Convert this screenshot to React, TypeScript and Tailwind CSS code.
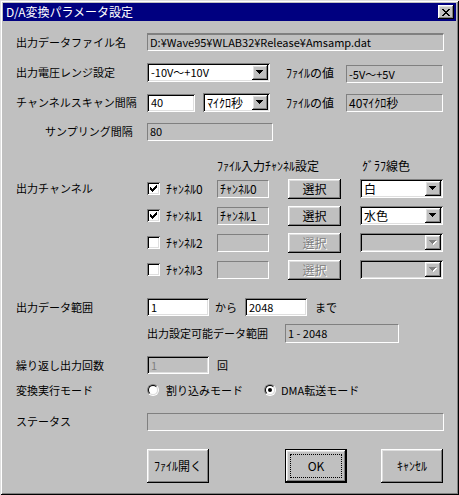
import React from "react";

const raised =
  "shadow-[inset_-1px_-1px_#000,inset_1px_1px_#fff,inset_-2px_-2px_#808080,inset_2px_2px_#dfdfdf]";
const sunken =
  "shadow-[inset_1px_1px_#808080,inset_-1px_-1px_#fff,inset_2px_2px_#000,inset_-2px_-2px_#dfdfdf]";

function Field({ className = "", children }: { className?: string; children?: React.ReactNode }) {
  return (
    <div
      className={`h-[18px] border border-t-[#808080] border-l-[#808080] border-b-white border-r-white pl-[2px] flex items-center whitespace-nowrap overflow-hidden ${className}`}
    >
      {children}
    </div>
  );
}

function Edit({
  className = "",
  disabled,
  children,
}: {
  className?: string;
  disabled?: boolean;
  children?: React.ReactNode;
}) {
  return (
    <div
      className={`h-[18px] ${sunken} pl-[4px] flex items-center ${
        disabled ? "bg-[#c0c0c0] text-[#808080]" : "bg-white"
      } ${className}`}
    >
      {children}
    </div>
  );
}

function Arrow({ disabled }: { disabled?: boolean }) {
  return (
    <svg width="8" height="5" viewBox="0 0 8 5" shapeRendering="crispEdges">
      {disabled && (
        <path d="M1 1h7v1h-1v1h-1v1h-1v1h-1v-1h-1v-1h-1v-1h-1z" fill="#fff" />
      )}
      <path
        d="M0 0h7v1h-1v1h-1v1h-1v1h-1v-1h-1v-1h-1v-1h-1z"
        fill={disabled ? "#808080" : "#000"}
      />
    </svg>
  );
}

function Combo({
  className = "",
  disabled,
  children,
}: {
  className?: string;
  disabled?: boolean;
  children?: React.ReactNode;
}) {
  return (
    <div
      className={`h-[19px] ${sunken} p-[2px] flex ${disabled ? "bg-[#c0c0c0]" : "bg-white"} ${className}`}
    >
      <div className="flex-1 pl-[2px] flex items-center whitespace-nowrap overflow-hidden">
        {children}
      </div>
      <div className={`w-[16px] h-full bg-[#c0c0c0] ${raised} flex items-center justify-center`}>
        <Arrow disabled={disabled} />
      </div>
    </div>
  );
}

function Button({
  className = "",
  disabled,
  isDefault,
  children,
}: {
  className?: string;
  disabled?: boolean;
  isDefault?: boolean;
  children?: React.ReactNode;
}) {
  if (isDefault) {
    return (
      <div className={`border border-black bg-[#c0c0c0] ${className}`}>
        <div className={`w-full h-full ${raised} p-[4px]`}>
          <div className="w-full h-full border border-dotted border-black flex items-center justify-center">
            {children}
          </div>
        </div>
      </div>
    );
  }
  return (
    <div
      className={`bg-[#c0c0c0] ${raised} flex items-center justify-center ${
        disabled ? "text-[#808080] [text-shadow:1px_1px_#fff]" : ""
      } ${className}`}
    >
      {children}
    </div>
  );
}

function Check({ checked }: { checked?: boolean }) {
  return (
    <div className={`w-[13px] h-[13px] bg-white ${sunken} flex items-center justify-center`}>
      {checked && (
        <svg width="7" height="7" viewBox="0 0 7 7" shapeRendering="crispEdges">
          <path d="M6 0h1v3h-1v1h-1v1h-1v1h-1v1h-1v-1h-1v-1h-1v-3h1v1h1v1h1v-1h1v-1h1z" fill="#000" />
        </svg>
      )}
    </div>
  );
}

function Radio({ checked }: { checked?: boolean }) {
  return (
    <div className="w-[12px] h-[12px] rounded-full border border-t-[#808080] border-l-[#808080] border-b-white border-r-white">
      <div className="w-full h-full rounded-full border border-t-black border-l-black border-b-[#dfdfdf] border-r-[#dfdfdf] bg-white flex items-center justify-center">
        {checked && <div className="w-[4px] h-[4px] rounded-full bg-black" />}
      </div>
    </div>
  );
}

const channels = [
  { name: "ﾁｬﾝﾈﾙ0", on: true, file: "ﾁｬﾝﾈﾙ0", color: "白" },
  { name: "ﾁｬﾝﾈﾙ1", on: true, file: "ﾁｬﾝﾈﾙ1", color: "水色" },
  { name: "ﾁｬﾝﾈﾙ2", on: false, file: "", color: "" },
  { name: "ﾁｬﾝﾈﾙ3", on: false, file: "", color: "" },
];

export default function App() {
  return (
    <div className="w-[459px] h-[495px] bg-[#c0c0c0] shadow-[inset_1px_1px_#dfdfdf,inset_-1px_-1px_#000,inset_2px_2px_#fff,inset_-2px_-2px_#808080] flex flex-col text-black text-[11px] leading-none font-['Noto_Sans_CJK_JP',sans-serif]">
      {/* title bar */}
      <div className="mx-[3px] mt-[3px] h-[18px] bg-[#000080] flex items-center justify-between pl-[3px] pr-[2px]">
        <span className="text-white text-[12px]">D/A変換パラメータ設定</span>
        <div className={`w-[16px] h-[14px] bg-[#c0c0c0] ${raised} flex items-center justify-center`}>
          <svg width="8" height="7" viewBox="0 0 8 7" shapeRendering="crispEdges">
            <path
              d="M0 0h2v1h1v1h2v-1h1v-1h2v1h-1v1h-1v1h-1v1h1v1h1v1h1v1h-2v-1h-1v-1h-2v1h-1v1h-2v-1h1v-1h1v-1h1v-1h-1v-1h-1v-1h-1z"
              fill="#000"
            />
          </svg>
        </div>
      </div>

      <div className="flex flex-col pl-[16px] pr-[15px]">
        <div className="mt-[12px] h-[18px] flex items-center">
          <span className="w-[131px]">出力データファイル名</span>
          <Field className="w-[297px] border-t-2 border-t-[#404040]">D:¥Wave95¥WLAB32¥Release¥Amsamp.dat</Field>
        </div>

        <div className="mt-[12px] h-[19px] flex items-center">
          <span className="w-[131px]">出力電圧レンジ設定</span>
          <Combo className="w-[123px]">-10V～+10V</Combo>
          <span className="ml-[16px] w-[60px] text-[12px]">ﾌｧｲﾙの値</span>
          <Field className="w-[97px] mt-[3px] h-[17px]">-5V～+5V</Field>
        </div>

        <div className="mt-[11px] h-[19px] flex items-center">
          <span className="w-[131px]">チャンネルスキャン間隔</span>
          <Edit className="w-[48px]">40</Edit>
          <Combo className="ml-[8px] w-[67px] text-[12px]">ﾏｲｸﾛ秒</Combo>
          <span className="ml-[16px] w-[60px] text-[12px]">ﾌｧｲﾙの値</span>
          <Field className="w-[97px] text-[12px]">40ﾏｲｸﾛ秒</Field>
        </div>

        <div className="mt-[11px] h-[17px] flex items-center">
          <span className="w-[131px] pl-[29px]">サンプリング間隔</span>
          <Field className="w-[126px] h-[17px]">80</Field>
        </div>

        <div className="mt-[19px] h-[14px] flex items-center text-[12px]">
          <span className="w-[201px]" />
          <span className="w-[145px]">ﾌｧｲﾙ入力ﾁｬﾝﾈﾙ設定</span>
          <span>ｸﾞﾗﾌ線色</span>
        </div>

        {channels.map((c, i) => (
          <div
            key={c.name}
            className={`${i === 0 ? "mt-[6px]" : "mt-[8px]"} h-[19px] flex items-center`}
          >
            <span className="w-[131px]">{i === 0 ? "出力チャンネル" : ""}</span>
            <Check checked={c.on} />
            <span className="ml-[6px] w-[51px] text-[12px]">{c.name}</span>
            <Field className="w-[52px] text-[12px]">{c.file}</Field>
            <Button className="ml-[19px] w-[53px] h-[20px] text-[12px]" disabled={!c.on}>
              選択
            </Button>
            <Combo className="ml-[19px] w-[83px] text-[12px]" disabled={!c.on}>
              {c.color}
            </Combo>
          </div>
        ))}

        <div className="mt-[19px] h-[18px] flex items-center">
          <span className="w-[131px]">出力データ範囲</span>
          <Edit className="w-[62px]">1</Edit>
          <span className="ml-[6px] w-[30px]">から</span>
          <Edit className="w-[62px]">2048</Edit>
          <span className="ml-[8px]">まで</span>
        </div>

        <div className="mt-[8px] h-[19px] flex items-center">
          <span className="w-[131px]" />
          <span className="w-[138px]">出力設定可能データ範囲</span>
          <Field className="w-[114px] h-[19px]">1 - 2048</Field>
        </div>

        <div className="mt-[13px] h-[18px] flex items-center">
          <span className="w-[131px]">繰り返し出力回数</span>
          <Edit className="w-[62px]" disabled>
            1
          </Edit>
          <span className="ml-[8px]">回</span>
        </div>

        <div className="mt-[8px] h-[16px] flex items-center">
          <span className="w-[131px]">変換実行モード</span>
          <Radio />
          <span className="ml-[7px] w-[98px]">割り込みモード</span>
          <Radio checked />
          <span className="ml-[5px]">DMA転送モード</span>
        </div>

        <div className="mt-[15px] h-[17px] flex items-center">
          <span className="w-[131px]">ステータス</span>
          <Field className="w-[297px] h-[17px]" />
        </div>

        <div className="mt-[19px] h-[34px] flex items-center text-[12px]">
          <span className="w-[131px]" />
          <Button className="w-[62px] h-[34px]">ﾌｧｲﾙ開く</Button>
          <Button className="ml-[76px] w-[62px] h-[34px]" isDefault>
            OK
          </Button>
          <Button className="ml-[34px] w-[62px] h-[34px]">ｷｬﾝｾﾙ</Button>
        </div>
      </div>
    </div>
  );
}
